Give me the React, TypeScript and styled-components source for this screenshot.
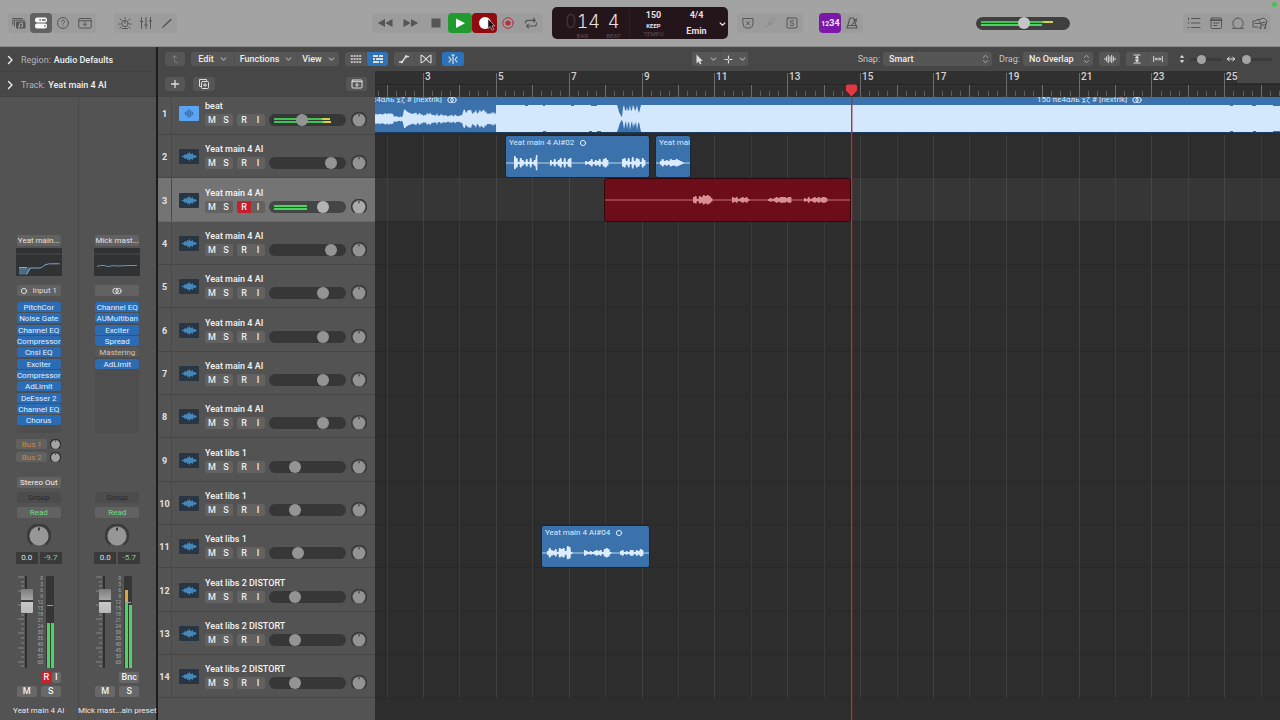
import React, { useEffect, useState } from 'react';
import styled, { createGlobalStyle, css } from 'styled-components';

/* ---------- theme values ---------- */

const BAR_WIDTH = 36.42;
const FIRST_BAR = 1.68;
const SIDE_WIDTH = 375;
const barX = (bar: number) => Math.round((bar - FIRST_BAR) * BAR_WIDTH);

const GlobalStyle = createGlobalStyle`
  * { box-sizing: border-box; }
  body {
    margin: 0;
    background: #2d2d2d;
    color: #e4e4e4;
    font-family: Roboto, "Liberation Sans", sans-serif;
    font-size: 9px;
    line-height: 12px;
  }
  button, input, select { font: inherit; color: inherit; margin: 0; padding: 0; border: 0; background: none; }
  svg { display: block; flex: none; }
`;

/* width of the timeline, which takes what the two side columns leave */
const useTimelineWidth = () => {
  const measure = () => Math.max(0, document.documentElement.clientWidth - SIDE_WIDTH);
  const [width, setWidth] = useState(measure);
  useEffect(() => {
    const update = () => setWidth(measure());
    window.addEventListener('resize', update);
    return () => window.removeEventListener('resize', update);
  }, []);
  return width;
};

const visibleBars = (width: number) => {
  const bars: number[] = [];
  for (let b = 2; barX(b) < width - 4; b++) bars.push(b);
  return bars;
};

/* ---------- icons ---------- */

type GlyphProps = { w?: number; h?: number; sw?: number; children: React.ReactNode };

const Glyph = ({ w = 14, h = 14, sw = 1, children }: GlyphProps) => (
  <svg width={w} height={h} viewBox={`0 0 ${w} ${h}`} fill="none" stroke="currentColor" strokeWidth={sw}
    strokeLinecap="round" strokeLinejoin="round" aria-hidden="true">
    {children}
  </svg>
);

const fill = { fill: 'currentColor', stroke: 'none' };

const LibraryIcon = () => (
  <Glyph>
    <path d="M.8 8.500V2.500h9.700M2.500 10.200V4.200h10" />
    <rect x="4" y="5.5" width="9.5" height="7" rx="1" {...fill} />
    <path d="M7.500 10.800V7.500l3-.6v3.400" stroke="#a0a0a0" />
    <circle cx="7" cy="10.8" r="1" fill="#a0a0a0" stroke="none" />
    <circle cx="10" cy="10.3" r="1" fill="#a0a0a0" stroke="none" />
  </Glyph>
);
const InspectorIcon = () => (
  <Glyph>
    <rect x="1" y="1.5" width="12" height="5" rx="2" {...fill} />
    <rect x="1" y="7.5" width="12" height="5" rx="2" {...fill} />
    <path d="M6 4h.2M8.500 4h2.500M10.800 10h.2" stroke="#5c5c5c" strokeWidth="1.6" />
  </Glyph>
);
const HelpIcon = () => (
  <Glyph>
    <circle cx="7" cy="7" r="5.5" />
    <path d="M5.400 5.600c.1-2 3.200-2 3.200 0 0 1.300-1.600 1.200-1.600 2.500M7 9.900v.1" />
  </Glyph>
);
const DrawerIcon = () => (
  <Glyph>
    <rect x=".8" y="2.5" width="12.4" height="9.5" rx="1" />
    <path d="M1 4.800h12M7 6v3.500M5.300 8 7 9.800 8.700 8" />
  </Glyph>
);
const SmartIcon = () => (
  <Glyph>
    <circle cx="7" cy="7.5" r="3.2" />
    <path d="M7 5v2.500M7 1.500v1M2 3l1.200 1M12 3l-1.200 1M.8 8h1.400M11.800 8h1.400M2 12l1-.8M12 12l-1-.8M4.500 12.500h5" />
  </Glyph>
);
const MixerIcon = () => (
  <Glyph>
    <path d="M2.500 1.500v11M7 1.500v11M11.500 1.500v11M1.200 5.500h2.600M5.700 9h2.600M10.200 5h2.600" />
  </Glyph>
);
const PencilIcon = () => (
  <Glyph>
    <path d="m3.500 10.500 7.500-7" strokeWidth="1.6" />
    <path d="m2.300 11.700.6-.6" />
  </Glyph>
);
const RewindIcon = () => (
  <Glyph w={16}><path d="M8 3v8L.8 7zM15.500 3v8L8.300 7z" {...fill} /></Glyph>
);
const ForwardIcon = () => (
  <Glyph w={16}><path d="M8 3v8l7.200-4zM.5 3v8l7.200-4z" {...fill} /></Glyph>
);
const StopIcon = () => <Glyph><rect x="2.5" y="2.5" width="9" height="9" {...fill} /></Glyph>;
const PlayIcon = () => <Glyph><path d="M3 2.500v9.500l9-4.700z" {...fill} /></Glyph>;
const RecordIcon = () => <Glyph><circle cx="7" cy="7" r="6" {...fill} /></Glyph>;
const CaptureIcon = () => (
  <Glyph><circle cx="7" cy="7" r="5.3" /><circle cx="7" cy="7" r="2.6" {...fill} /></Glyph>
);
const CycleIcon = () => (
  <Glyph sw={1.2}>
    <path d="M1.500 7V6.500q0-2.200 2.200-2.200H11M9.500 2.500l1.800 1.800-1.800 1.800M12.500 7v.8q0 2.200-2.200 2.200H3M4.500 11.800 2.700 10l1.800-1.800" />
  </Glyph>
);
const ReplaceIcon = () => (
  <Glyph><path d="M2 2.500h10v5.500q0 3-3 4H5q-3-1-3-4zM5.300 5.500l3.400 3.500M8.700 5.500 5.300 9" /></Glyph>
);
const TunerIcon = () => (
  <Glyph><path d="m2 12 4-4M6 8l1.500.4L12 4M6 8l-.4-1.800L10 2" /></Glyph>
);
const SoloIcon = () => (
  <Glyph>
    <rect x="2" y="2" width="10" height="10" rx="1" />
    <path d="M8.800 5.300q-.6-.8-1.800-.8-1.700 0-1.700 1.200T7 7t1.800 1.300T7 9.600q-1.300 0-1.900-.8" />
  </Glyph>
);
const MetronomeIcon = () => (
  <Glyph sw={1.2}><path d="M5 2h3.500L12 12H2zM3.200 9.500h7.500M6.500 9.500l5-6.500M9.800 3.600l2 1.500" /></Glyph>
);
const ListIcon = () => (
  <Glyph><path d="M4.500 2.500H13M4.500 7H13M4.500 11.500H13M1.500 2v2M1 7h1M1 11.500h1" /></Glyph>
);
const NotesIcon = () => (
  <Glyph>
    <rect x="2" y="2" width="10.5" height="10.5" rx="1" />
    <path d="M2 4.200h10.500" strokeWidth="1.8" />
    <path d="M4.500 7h5.500M4.500 9.500h3.500" />
  </Glyph>
);
const LoopIcon = () => (
  <Glyph>
    <path d="M1.500 12.300h11M4.700 12.300C2.900 11.300 1.900 9.500 1.900 7.300a5.100 5.300 0 0 1 10.200 0c0 2.200-1 4-2.800 5" />
  </Glyph>
);
const BrowserIcon = () => (
  <Glyph w={16}>
    <path d="M6 11H1V5h3l1-1.500h2l5-1.500 3 3-1 4H9M3 7.500h5M6 3.500l3 4M9 12V7l4-.8M13.500 12V8" />
    <circle cx="8.3" cy="12" r="1" {...fill} />
    <circle cx="12.8" cy="12" r="1" {...fill} />
  </Glyph>
);
const ChevronRight = () => <Glyph w={8} h={10} sw={1.4}><path d="m2.500 1.500 3.500 3.500-3.500 3.500" /></Glyph>;
const ChevronDown = () => <Glyph w={7} h={6} sw={1.2}><path d="m1.200 2 2.300 2.200L5.800 2" /></Glyph>;
const UpDown = () => <Glyph w={7} h={10}><path d="m1.300 3.500 2.200-2.200 2.200 2.200M1.300 6.500l2.200 2.200 2.200-2.200" /></Glyph>;
const UpArrow = () => <Glyph w={10} h={10}><path d="M4.500 1.500v5q0 2 2 2h1M2.500 3.500l2-2 2 2" /></Glyph>;
const GridIcon = () => (
  <Glyph w={12} h={10} sw={1.3}><path d="M.8 2h10.400M.8 5h10.400M.8 8h10.400" strokeDasharray="2 .8" strokeLinecap="butt" /></Glyph>
);
const RegionsIcon = () => (
  <Glyph w={12} h={10} sw={1.8}><path d="M1 2h5M7 2h4M1 5h2M4 5h7M1 8h6M8 8h3" strokeLinecap="butt" /></Glyph>
);
const AutomationIcon = () => (
  <Glyph w={12} h={10} sw={1.3}>
    <path d="M1.500 8h2.500l4-5.500h2.500" />
    <circle cx="4" cy="8" r="1.2" {...fill} />
    <circle cx="8" cy="2.5" r="1.2" {...fill} />
  </Glyph>
);
const FlexIcon = () => (
  <Glyph w={12} h={10} sw={1.1}><path d="M1 1.200v7.600q1.500 0 5-3.800t5-3.800v7.600q-1.500 0-5-3.800T1 1.200z" /></Glyph>
);
const CatchIcon = () => (
  <Glyph w={12} h={10} sw={1.2}>
    <path d="M6 3v6.500M2 3l2 2.500-2 2.500M10 3 8 5.500 10 8" />
    <path d="M4 .5h4L6 3z" {...fill} />
  </Glyph>
);
const PlusIcon = () => <Glyph w={10} h={10} sw={1.3}><path d="M5 1.500v7M1.500 5h7" /></Glyph>;
const DuplicateIcon = () => (
  <Glyph w={12} h={12}>
    <path d="M2.500 8.500h-1v-7h7v1" />
    <rect x="3.5" y="3.5" width="7" height="7" rx="1" />
    <path d="M7 5.300v3.400M5.300 7h3.400" />
  </Glyph>
);
const TrayIcon = () => (
  <Glyph w={12} h={12}>
    <rect x="1" y="2" width="10" height="8" rx="1" />
    <path d="M1 3.700h10M6 5v3M4.500 6.700 6 8.200l1.500-1.500" />
  </Glyph>
);
const PointerIcon = () => <Glyph w={9} h={11}><path d="M1.500.5v9l2-2 1.500 3 1.500-.7-1.400-2.800h2.700z" {...fill} /></Glyph>;
const CrossIcon = () => <Glyph w={9} h={9} sw={1.2}><path d="M4.500 1v2.500M4.500 5.500V8M1 4.500h2.500M5.500 4.500H8" /></Glyph>;
const WaveIcon = () => (
  <Glyph w={12} h={12}><path d="M1 5.300v1.400M2.700 3.800v4.400M4.300 2.300v7.400M6 3.800v4.400M7.700 2.300v7.400M9.300 3.800v4.400M11 5.300v1.400" /></Glyph>
);
const FitHeightIcon = () => <Glyph w={10} h={10} sw={1.2}><path d="M2 1h6M2 9h6M5 3v4M3.700 3.800 5 2.500l1.300 1.300M3.700 6.200 5 7.500l1.300-1.300" /></Glyph>;
const FitWidthIcon = () => <Glyph w={10} h={10}><path d="M.7 2.500v5M9.300 2.500v5M2.500 5h5M3.500 3.800 2.300 5l1.200 1.200M6.500 3.800 7.700 5 6.500 6.200" /></Glyph>;
const VerticalIcon = () => <Glyph w={8} h={10}><path d="M4 1 1.800 3.800h4.400zM4 9 1.800 6.200h4.400z" {...fill} /></Glyph>;
const HorizontalIcon = () => <Glyph w={10} h={8}><path d="M1.500 4h7M3.300 2 1.300 4l2 2M6.700 2l2 2-2 2" /></Glyph>;
const StereoIcon = () => (
  <Glyph w={12} h={8}><circle cx="4.5" cy="4" r="2.7" /><circle cx="7.5" cy="4" r="2.7" /></Glyph>
);
const MonoIcon = () => <Glyph w={8} h={8}><circle cx="4" cy="4" r="2.6" /></Glyph>;

const MouseCursor = styled.svg`
  position: absolute;
  left: 15px;
  top: 5px;
`;

/* ---------- shared control pieces ---------- */

const Cluster = styled.div<{ $gap?: number }>`
  display: flex;
  align-items: center;
  gap: ${p => p.$gap ?? 6}px;
`;

const Stretch = styled.div<{ $grow: number }>`
  flex: ${p => p.$grow} 1 0;
`;

/* ---------- main toolbar ---------- */

const Page = styled.div`
  min-height: 100vh;
  display: flex;
  flex-direction: column;
`;

const Toolbar = styled.header`
  position: relative;
  display: flex;
  align-items: center;
  height: 47px;
  padding: 0 9px 0 8px;
  background: #a3a3a3;
  color: #4c4c4c;
  border-bottom: 1px solid #8a8a8a;
`;

const ToolGroup = styled.div`
  display: flex;
  align-items: center;
  height: 20px;
  border-radius: 4px;
  background: #9c9c9c;
`;

const ToolButton = styled.button<{ $bg?: string; $fg?: string; $w?: number }>`
  position: relative;
  display: grid;
  place-items: center;
  width: ${p => p.$w ?? 22}px;
  height: 20px;
  border-radius: 4px;
  background: ${p => p.$bg ?? 'transparent'};
  color: ${p => p.$fg ?? '#555'};
`;

const Lcd = styled.section`
  display: flex;
  align-items: stretch;
  width: 176px;
  height: 32px;
  padding: 3px 0 2px 10px;
  border-radius: 5px;
  background: #24151a;
  color: #e8dfe2;
`;

const LcdCell = styled.div<{ $w: number }>`
  display: flex;
  flex-direction: column;
  align-items: center;
  justify-content: space-between;
  width: ${p => p.$w}px;
  font-size: 9px;
  line-height: 11px;
  font-weight: 700;
`;

const LcdDivider = styled.div`
  width: 6px;
  border-right: 1px solid #2f2026;
`;

const LcdDigits = styled.div`
  font-family: Inter, "Liberation Sans", sans-serif;
  font-size: 18px;
  line-height: 23px;
  font-weight: 300;
  font-variant-numeric: tabular-nums;
  white-space: nowrap;
`;

const Ghost = styled.span`
  color: #48363b;
`;

const LcdCaption = styled.span<{ $bright?: boolean }>`
  font-size: 6px;
  line-height: 6px;
  font-weight: ${p => (p.$bright ? 700 : 400)};
  color: ${p => (p.$bright ? '#e8dfe2' : '#604f54')};
`;

const LcdMenu = styled.button`
  display: grid;
  place-items: center;
  width: 12px;
  color: #e8dfe2;
`;

const CountIn = styled.span`
  font-size: 9px;
  font-weight: 700;
  small { font-size: 7px; }
`;

const CameraDot = styled.i`
  position: absolute;
  right: 3px;
  top: 2px;
  width: 5px;
  height: 5px;
  border-radius: 50%;
  background: #4cc04f;
`;

/* ---------- level sliders ---------- */

const LevelBox = styled.div<{ $w: number; $h: number; $bg: string }>`
  position: relative;
  display: flex;
  flex-direction: column;
  justify-content: center;
  gap: 1px;
  width: ${p => p.$w}px;
  height: ${p => p.$h}px;
  padding: 0 5px;
  border-radius: 7px;
  background: ${p => p.$bg};
`;

const LevelBar = styled.i<{ $hot?: boolean }>`
  display: block;
  height: 2px;
  background: ${p => (p.$hot ? 'linear-gradient(90deg, #3fc455 84%, #d9d23c 88%)' : '#4fd062')};
`;

const LevelRange = styled.input<{ $thumb: string }>`
  position: absolute;
  inset: 0;
  width: 100%;
  height: 100%;
  appearance: none;
  &::-webkit-slider-thumb {
    appearance: none;
    width: 12px;
    height: 12px;
    border-radius: 50%;
    background: ${p => p.$thumb};
  }
`;

type LevelProps = {
  label: string; value: number; levels?: [number, number]; hot?: boolean;
  w?: number; h?: number; bg?: string; thumb?: string;
};

const Level = ({ label, value, levels, hot, w = 77, h = 12, bg = '#373737', thumb = '#999' }: LevelProps) => {
  const [v, setV] = useState(value);
  return (
    <LevelBox $w={w} $h={h} $bg={bg}>
      {levels?.map((n, i) => <LevelBar key={i} $hot={hot && (i === 0 || n > 80)} style={{ width: `${n}%` }} />)}
      <LevelRange type="range" aria-label={label} min={0} max={100} value={v} $thumb={thumb}
        onChange={e => setV(Number(e.target.value))} />
    </LevelBox>
  );
};

/* ---------- body columns ---------- */

const Body = styled.div`
  flex: 1;
  display: flex;
`;

const Inspector = styled.aside`
  display: flex;
  flex-direction: column;
  width: 158px;
  flex: none;
  background: #535353;
  border-right: 2px solid #1c1c1c;
`;

const InspectorRow = styled.button`
  display: flex;
  align-items: center;
  gap: 7px;
  height: 25px;
  padding: 1px 6px 0;
  background: #474747;
  border-bottom: 1px solid #424242;
  text-align: left;
  font-weight: 500;
  color: #f0f0f0;
  white-space: nowrap;
`;

const RowKey = styled.span`
  color: #b4b4b4;
  margin-right: -4px;
  font-weight: 400;
`;

const Strips = styled.div`
  flex: 1;
  display: flex;
`;

const Strip = styled.section`
  flex: 1 1 0;
  min-width: 0;
  display: flex;
  flex-direction: column;
  align-items: center;
  justify-content: flex-end;
  padding-bottom: 4px;
  font-size: 8px;
  line-height: 10px;
  & + & { border-left: 1px solid #494949; }
`;

const slotBase = css`
  display: block;
  width: 44px;
  height: 11px;
  border-radius: 2px;
  line-height: 11px;
  text-align: center;
  white-space: nowrap;
`;

const StripButton = styled.button<{ $fg?: string; $bg?: string }>`
  ${slotBase}
  color: ${p => p.$fg ?? '#e2e2e2'};
  background: ${p => p.$bg ?? '#626262'};
`;

const EqThumb = styled.svg`
  margin: 2px 0 9px;
`;

const InputRow = styled.button`
  ${slotBase}
  display: flex;
  align-items: center;
  justify-content: center;
  gap: 4px;
  background: #626262;
  color: #dcdcdc;
`;

const PluginList = styled.ul`
  display: flex;
  flex-direction: column;
  gap: 1px;
  width: 44px;
  height: 131px;
  margin: 6px 0;
  padding: 0;
  list-style: none;
  background: #4e4e4e;
  li:nth-child(3n - 1) { margin-bottom: 1px; }
`;

const Plugin = styled.button<{ $off?: boolean }>`
  ${slotBase}
  height: 10px;
  background: ${p => (p.$off ? '#585858' : '#2b6cb4')};
  color: ${p => (p.$off ? '#d2c3b0' : '#e2efff')};
`;

const Sends = styled.div`
  display: flex;
  flex-direction: column;
  gap: 3px;
  height: 23px;
  margin-bottom: 15px;
`;

const SendRow = styled.div`
  display: flex;
  align-items: center;
  gap: 3px;
  height: 10px;
  width: 45px;
`;

const SendButton = styled.button`
  width: 31px;
  height: 10px;
  border-radius: 2px;
  background: #616161;
  color: #c58a45;
  line-height: 11px;
`;

const Dial = styled.button`
  display: block;
  border-radius: 50%;
`;

const Spaced = styled.div<{ $top: number }>`
  display: flex;
  align-items: flex-start;
  justify-content: center;
  gap: 2px;
  margin-top: ${p => p.$top}px;
`;

const Readout = styled.output<{ $green?: boolean }>`
  width: 22px;
  height: 12px;
  background: #3a3a3a;
  text-align: center;
  line-height: 12px;
  color: ${p => (p.$green ? '#7ad09a' : '#e0e0e0')};
`;

const FaderArea = styled.div`
  position: relative;
  width: 46px;
  height: 92px;
  margin: 12px 0 4px;
`;

const FaderRange = styled.input`
  position: absolute;
  left: 5px;
  top: 0;
  width: 12px;
  height: 92px;
  appearance: none;
  writing-mode: vertical-lr;
  direction: rtl;
  &::-webkit-slider-thumb {
    appearance: none;
    width: 12px;
    height: 24px;
    border-radius: 1px;
    background: linear-gradient(#7d7d7d, #a6a6a6 46%, #3c3c3c 48%, #3c3c3c 53%, #c8c8c8 55%, #b9b9b9);
  }
`;

const SmallKeys = styled.div`
  display: flex;
  justify-content: flex-end;
  width: 44px;
  height: 11px;
  margin-bottom: 3px;
`;

const KeyPair = styled.div`
  display: flex;
  justify-content: space-between;
  width: 44px;
  margin-bottom: 8px;
`;

const StripKey = styled.button<{ $bg?: string; $w?: number }>`
  width: ${p => p.$w ?? 20}px;
  height: 11px;
  border-radius: 2px;
  background: ${p => p.$bg ?? '#686868'};
  font-size: 9px;
  font-weight: 500;
  line-height: 11px;
  color: #f2f2f2;
`;

const StripName = styled.div`
  height: 11px;
  font-size: 8px;
  line-height: 12px;
  white-space: nowrap;
  color: #e8e8e8;
`;

const PanDial = ({ size, ring = '#3b3b3b', face = '#979797', label }: { size: number; ring?: string; face?: string; label: string }) => (
  <Dial type="button" aria-label={label}>
    <svg width={size} height={size} viewBox="0 0 24 24" aria-hidden="true">
      <path d="M5.500 20.500a11 11 0 1 1 13 0" fill="none" stroke={ring} strokeWidth="2.6" />
      <circle cx="12" cy="12" r="9.5" fill={face} />
      <path d="M12 3.500v3" stroke="#2f2f2f" strokeWidth="1.8" />
    </svg>
  </Dial>
);

const FADER_MARKS = ['0', '3', '6', '9', '12', '15', '18', '21', '24', '30', '35', '40', '45', '50', '60'];

type StripData = {
  setting: string; mono: boolean; plugins: string[]; sends: string[]; output?: string;
  peak: string; meters: [number, number]; hold: number; hot?: boolean; name: string; armed?: boolean;
};

const STRIPS: StripData[] = [
  {
    setting: 'Yeat main...', mono: true,
    plugins: ['PitchCor', 'Noise Gate', 'Channel EQ', 'Compressor', 'Cnsl EQ', 'Exciter', 'Compressor', 'AdLimit', 'DeEsser 2', 'Channel EQ', 'Chorus'],
    sends: ['Bus 1', 'Bus 2'], output: 'Stereo Out', peak: '-9.7', meters: [47, 47], hold: 29, name: 'Yeat main 4 AI', armed: true,
  },
  {
    setting: 'Mick mast...', mono: false,
    plugins: ['Channel EQ', 'AUMultiban', 'Exciter', 'Spread', 'Mastering', 'AdLimit'],
    sends: [], peak: '-5.7', meters: [14, 29], hold: 26, hot: true, name: 'Mick mast...ain preset',
  },
];

const ChannelStrip = ({ s }: { s: StripData }) => {
  const [vol, setVol] = useState(81);
  return (
    <Strip aria-label={s.name}>
      <StripButton type="button">{s.setting}</StripButton>
      <EqThumb width="46" height="28" viewBox="0 0 46 28" aria-hidden="true">
        <rect width="46" height="28" fill="#303234" />
        <path d="M0 6h46" stroke="#4a4d50" />
        {s.mono
          ? <>
            <path d="M3 19.500h12l-4 7H3z" fill="#4b6b87" />
            <path d="M3 19.500h8M10.500 26.500l4-6.500h9q2 0 4-2t6-2.200h10" fill="none" stroke="#7fa6c8" />
          </>
          : <path d="M3 18.500q3-1.500 7-1l4 1 5-.8 6 .3 10-.5h8" fill="none" stroke="#6f93b8" />}
      </EqThumb>
      <InputRow type="button" aria-label="Input">
        {s.mono ? <><MonoIcon />Input 1</> : <StereoIcon />}
      </InputRow>
      <PluginList>
        {s.plugins.map((p, i) => <li key={i}><Plugin type="button" $off={p === 'Mastering'}>{p}</Plugin></li>)}
      </PluginList>
      <Sends>
        {s.sends.map(b => (
          <SendRow key={b}>
            <SendButton type="button">{b}</SendButton>
            <PanDial size={11} label={`${b} level`} ring="#2e2e2e" face="#a4a4a4" />
          </SendRow>
        ))}
      </Sends>
      {s.output
        ? <StripButton type="button" $fg="#f0f0f0">{s.output}</StripButton>
        : <StripButton type="button" $bg="transparent" aria-label="Output" />}
      <Spaced $top={4}><StripButton type="button" $bg="#4c4c4c" $fg="#292929">Group</StripButton></Spaced>
      <Spaced $top={4}><StripButton type="button" $fg="#6fdc86">Read</StripButton></Spaced>
      <Spaced $top={6}><PanDial size={24} label={`${s.name} pan`} /></Spaced>
      <Spaced $top={4}>
        <Readout>0.0</Readout>
        <Readout $green>{s.peak}</Readout>
      </Spaced>
      <FaderArea>
        <svg width="46" height="92" viewBox="0 0 46 92" aria-hidden="true">
          <rect x="9" y="0" width="2" height="92" fill="#2f2f2f" />
          {Array.from({ length: 20 }, (_, i) => (
            <path key={i} d={`M${i % 3 === 0 ? 2 : 5} ${Math.round(1 + i * 4.7)}h${i % 3 === 0 ? 6 : 3}`} stroke="#8a8a8a" strokeWidth="1" />
          ))}
          {FADER_MARKS.map((m, i) => (
            <text key={m} x="27" y={4 + i * 6} fontSize="5" fill="#a8a8a8" textAnchor="end">{m}</text>
          ))}
          <rect x="30" y="0" width="8" height="92" fill="#363636" />
          {s.meters.map((top, i) => (
            <g key={i}>
              <rect x={31 + i * 4} y={top} width="3" height={92 - top} fill="#4ad560" />
              {s.hot && i === 0 && <rect x="31" y={top} width="3" height="12" fill="#e0a53a" />}
            </g>
          ))}
          <path d={`M31 ${s.hold + 0.5}h6`} stroke="#a0a0a0" />
        </svg>
        <FaderRange type="range" aria-label={`${s.name} volume`} min={0} max={100} value={vol}
          onChange={e => setVol(Number(e.target.value))} />
      </FaderArea>
      <SmallKeys>
        {s.armed
          ? <><StripKey type="button" $w={11} $bg="#c5222e">R</StripKey><StripKey type="button" $w={9}>I</StripKey></>
          : <StripKey type="button">Bnc</StripKey>}
      </SmallKeys>
      <KeyPair>
        <StripKey type="button">M</StripKey>
        <StripKey type="button">S</StripKey>
      </KeyPair>
      <StripName>{s.name}</StripName>
    </Strip>
  );
};

/* ---------- tracks area ---------- */

const Arrange = styled.main`
  flex: 1;
  min-width: 0;
  display: flex;
  flex-direction: column;
`;

const MenuBar = styled.div`
  display: flex;
  align-items: center;
  height: 24px;
  padding: 0 8px 0 7px;
  background: #474747;
  white-space: nowrap;
`;

const Segment = styled.div`
  display: flex;
  height: 14px;
  border-radius: 3px;
  background: #565656;
  overflow: hidden;
`;

const SegButton = styled.button<{ $w: number; $on?: boolean; $dim?: boolean }>`
  display: flex;
  align-items: center;
  justify-content: center;
  gap: 6px;
  width: ${p => p.$w}px;
  height: 14px;
  background: ${p => (p.$on ? '#2c73bb' : 'transparent')};
  color: ${p => (p.$dim ? '#7c7c7c' : '#dedede')};
  & + & { border-left: 1px solid #4f4f4f; }
`;

const MenuText = styled.span`
  font-weight: 500;
  color: #ececec;
`;

const Faint = styled.span`
  color: #9a9a9a;
`;

const FieldLabel = styled.label`
  color: #c4c4c4;
  margin: 0 -3px 0 1px;
`;

const SelectBox = styled.div<{ $w: number }>`
  position: relative;
  width: ${p => p.$w}px;
  height: 14px;
  border-radius: 3px;
  background: #565656;
  color: #a8a8a8;
  select {
    width: 100%;
    height: 14px;
    padding: 0 6px;
    appearance: none;
    font-weight: 500;
    color: #efefef;
  }
  svg { position: absolute; right: 3px; top: 2px; pointer-events: none; }
`;

const ZoomRange = styled.input`
  width: 32px;
  height: 9px;
  appearance: none;
  background: linear-gradient(#3b3b3b, #3b3b3b) center / 100% 3px no-repeat;
  &::-webkit-slider-thumb {
    appearance: none;
    width: 9px;
    height: 9px;
    border-radius: 50%;
    background: #a4a4a4;
  }
`;

const TrackGrid = styled.div`
  flex: 1;
  display: grid;
  grid-template-columns: 217px minmax(0, 1fr);
  grid-template-rows: 26px minmax(0, auto);
`;

const HeaderTools = styled.div`
  display: flex;
  align-items: center;
  gap: 8px;
  padding: 0 8px 0 7px;
  background: #474747;
`;

const Ruler = styled.div`
  position: relative;
  background: #303030;
  overflow: hidden;
`;

const RulerLabel = styled.span`
  position: absolute;
  top: 0;
  font-size: 10px;
  font-weight: 500;
  color: #d4d4d4;
`;

const OuterRange = styled.div`
  position: absolute;
  top: 0;
  right: 0;
  height: 12px;
  background: #484848;
`;

const TrackList = styled.ol`
  margin: 0;
  padding: 0;
  list-style: none;
  background: #535353;
`;

const rowRhythm = css`
  height: 43px;
  &:first-child { height: 38px; }
  &:nth-child(3n) { height: 44px; }
`;

const TrackRow = styled.li<{ $selected?: boolean }>`
  ${rowRhythm}
  display: flex;
  align-items: flex-end;
  overflow: hidden;
  background: ${p => (p.$selected ? '#747474' : '#535353')};
  border-bottom: 1px solid ${p => (p.$selected ? '#6a6a6a' : '#474747')};
`;

const TrackNumber = styled.span`
  align-self: stretch;
  display: flex;
  align-items: flex-end;
  justify-content: center;
  width: 14px;
  padding-bottom: 14px;
  border-right: 1px solid #4a4a4a;
  font-weight: 700;
  color: #e2e2e2;
`;

const TrackIcon = styled.svg`
  margin: 0 6px 13px 7px;
`;

const TrackMain = styled.div`
  flex: 1;
  padding-bottom: 7px;
`;

const TrackName = styled.div`
  height: 14px;
  line-height: 14px;
  font-weight: 500;
  color: #f4f4f4;
  white-space: nowrap;
`;

const TrackControls = styled.div`
  display: flex;
  align-items: center;
  height: 14px;
`;

const KeyGroup = styled.div`
  display: flex;
  width: 28px;
  height: 12px;
  margin-right: 4px;
  border-radius: 2px;
  background: #626262;
  overflow: hidden;
`;

const TrackKey = styled.button<{ $armed?: boolean }>`
  flex: 1;
  font-weight: 500;
  line-height: 13px;
  color: #ededed;
  background: ${p => (p.$armed ? '#c3202d' : 'transparent')};
`;

const DialSlot = styled.div`
  margin-left: 5px;
`;

const Lanes = styled.div`
  position: relative;
  overflow: hidden;
  background: #2d2d2d;
`;

const GridLines = styled.svg`
  position: absolute;
  left: 0;
  top: 0;
  pointer-events: none;
`;

const Lane = styled.div<{ $selected?: boolean }>`
  ${rowRhythm}
  position: relative;
  background: ${p => (p.$selected ? '#363636' : 'transparent')};
  border-bottom: 1px solid #292929;
`;

const Clip = styled.div<{ $red?: boolean }>`
  position: absolute;
  top: 0;
  bottom: 0;
  overflow: hidden;
  border: 1px solid ${p => (p.$red ? '#2e0a0e' : '#16283c')};
  border-radius: 3px;
  background: ${p => (p.$red ? '#6d0d19' : '#3b72ac')};
`;

const ClipTitle = styled.span`
  position: absolute;
  left: 3px;
  top: 1px;
  display: flex;
  align-items: center;
  gap: 5px;
  font-size: 8px;
  line-height: 11px;
  white-space: nowrap;
  color: #dcebfb;
`;

const BeatClip = styled.div`
  position: absolute;
  inset: 0 0 1px;
  overflow: hidden;
  background: #3b72ac;
  border-bottom: 1px solid #1b3c60;
`;

const BeatTitle = styled.span`
  position: absolute;
  top: -3px;
  display: flex;
  align-items: center;
  gap: 4px;
  font-size: 8px;
  line-height: 11px;
  white-space: nowrap;
  color: #d7e8fa;
`;

const Playhead = styled.div`
  position: absolute;
  top: 0;
  bottom: 0;
  width: 1px;
  background: #b0343c;
  box-shadow: 1px 0 rgba(150, 40, 48, 0.4);
`;

const PlayheadPin = styled.svg`
  position: absolute;
  top: 13px;
`;

/* ---------- data ---------- */

type Track = { name: string; vol: number; levels?: [number, number]; selected?: boolean };

const TRACKS: Track[] = [
  { name: 'beat', vol: 42, levels: [84, 85] },
  { name: 'Yeat main 4 AI', vol: 86 },
  { name: 'Yeat main 4 AI', vol: 74, levels: [49, 49], selected: true },
  { name: 'Yeat main 4 AI', vol: 86 },
  { name: 'Yeat main 4 AI', vol: 74 },
  { name: 'Yeat main 4 AI', vol: 74 },
  { name: 'Yeat main 4 AI', vol: 74 },
  { name: 'Yeat main 4 AI', vol: 74 },
  { name: 'Yeat libs 1', vol: 30 },
  { name: 'Yeat libs 1', vol: 30 },
  { name: 'Yeat libs 1', vol: 35 },
  { name: 'Yeat libs 2 DISTORT', vol: 30 },
  { name: 'Yeat libs 2 DISTORT', vol: 30 },
  { name: 'Yeat libs 2 DISTORT', vol: 30 },
];

type Burst = { x: number; amps: number[] };
type ClipData = { track: number; from: number; to: number; title?: string; loop?: boolean; red?: boolean; bursts: Burst[] };

const CLIPS: ClipData[] = [
  {
    track: 1, from: 5.25, to: 9.22, title: 'Yeat main 4 AI#02', loop: true,
    bursts: [
      { x: 8, amps: [7, 5, 1, 5, 3, 1, 4, 1, 5, 1, 3, 8] },
      { x: 44, amps: [3, 1, 4, 1, 3, 5, 1, 5, 1, 4, 5] },
      { x: 79, amps: [2, 1, 2, 4, 1, 3, 2, 4, 1, 4, 5, 3] },
      { x: 116, amps: [4, 5, 2, 5, 1, 6, 2, 5, 4, 1, 5, 3] },
    ],
  },
  { track: 1, from: 9.37, to: 10.35, title: 'Yeat mai', bursts: [{ x: 4, amps: [2, 4, 2, 3, 2, 4, 3, 3, 4, 3, 2, 1] }] },
  {
    track: 2, from: 7.98, to: 14.75, red: true,
    bursts: [
      { x: 88, amps: [3, 4, 1, 4, 3, 5, 4, 5, 4, 2] },
      { x: 127, amps: [3, 2, 3, 1, 2, 3, 2, 3, 1] },
      { x: 163, amps: [1, 2, 1, 2, 3, 2, 3, 3, 3, 2, 3, 3] },
      { x: 199, amps: [2, 1, 3, 1, 2, 3, 2, 3, 2, 3, 3, 2] },
    ],
  },
  {
    track: 10, from: 6.25, to: 9.23, title: 'Yeat main 4 AI#04', loop: true,
    bursts: [
      { x: 5, amps: [2, 5, 3, 2, 4, 1, 5, 4, 5, 2, 7, 6, 1] },
      { x: 42, amps: [3, 2, 1, 2, 1, 2, 3, 2, 3, 1, 4, 5, 4, 1] },
      { x: 78, amps: [2, 3, 1, 2, 1, 3, 3, 1, 3, 2, 4, 3] },
    ],
  },
];

const burstPath = ({ x, amps }: Burst, mid: number) => {
  const step = 2;
  const top = amps.map((a, i) => `${x + i * step} ${mid - a} ${x + i * step + 1.4} ${mid - a}`);
  const bottom = amps.map((a, i) => `${x + i * step + 1.4} ${mid + a * 0.9} ${x + i * step} ${mid + a * 0.9}`).reverse();
  return `M${top.join(' L')} L${bottom.join(' L')}Z`;
};

const noise = (n: number) => {
  const v = Math.sin(n * 12.9898) * 43758.5453;
  return v - Math.floor(v);
};

/* envelope of the intro before the loud section of the beat */
const introPath = () => {
  const mid = 22;
  const pts: number[] = [];
  for (let x = 0; x <= 121; x++) {
    let a = 4 + noise(x) * 2;
    if (x > 18 && x < 28) a = 1.5 + noise(x) * 2;
    if (x >= 29 && x < 38) a = 9 - (x - 29) * 0.6 + noise(x);
    if (x >= 38 && x < 68) a = 3 + noise(x) * 4;
    if (x >= 68 && x < 88) a = 2.5 + noise(x) * 3;
    if (x >= 88 && x < 114) a = 5 + noise(x) * 5;
    if (x >= 114) a = 3.5 + noise(x) * 4;
    pts.push(a);
  }
  const top = pts.map((a, x) => `${x} ${(mid - a).toFixed(1)}`);
  const low = pts.map((a, x) => `${x} ${(mid + a * 0.95).toFixed(1)}`).reverse();
  return `M${top.join('L')}L${low.join('L')}Z`;
};

/* short gap with drum hits between the two loud sections */
const breakPath = () => {
  const tops = [0, 3, 7, 9, 11, 12, 3, 0, 5, 6, 2, 6, 5, 0, 6, 5, 0, 2, 6, 4, 0, 5, 8, 4, 0];
  const lows = [0, 3, 6, 9, 11, 12, 9, 3, 8, 11, 3, 9, 10, 2, 8, 11, 4, 9, 6, 11, 2, 8, 10, 5, 0];
  const top = tops.map((t, i) => `${242 + i} ${8 + t}`);
  const low = lows.map((t, i) => `${242 + i} ${35 - t}`).reverse();
  return `M${top.join('L')}L${low.join('L')}Z`;
};

/* ---------- composed sections ---------- */

const AppToolbar = () => (
  <Toolbar>
    <Cluster $gap={18}>
      <ToolGroup>
        <ToolButton type="button" aria-label="Library"><LibraryIcon /></ToolButton>
        <ToolButton type="button" aria-label="Inspector" $bg="#616161" $fg="#fafafa"><InspectorIcon /></ToolButton>
        <ToolButton type="button" aria-label="Quick Help"><HelpIcon /></ToolButton>
        <ToolButton type="button" aria-label="Toolbar"><DrawerIcon /></ToolButton>
      </ToolGroup>
      <ToolGroup>
        <ToolButton type="button" aria-label="Smart Controls" $w={21}><SmartIcon /></ToolButton>
        <ToolButton type="button" aria-label="Mixer"><MixerIcon /></ToolButton>
        <ToolButton type="button" aria-label="Editors" $w={20}><PencilIcon /></ToolButton>
      </ToolGroup>
    </Cluster>
    <Stretch $grow={26} />
    <Cluster $gap={9}>
      <ToolGroup>
        <ToolButton type="button" aria-label="Rewind" $w={26}><RewindIcon /></ToolButton>
        <ToolButton type="button" aria-label="Forward" $w={26}><ForwardIcon /></ToolButton>
        <ToolButton type="button" aria-label="Stop" $w={24}><StopIcon /></ToolButton>
        <ToolButton type="button" aria-label="Play" $w={24} $bg="#219b2f" $fg="#fff"><PlayIcon /></ToolButton>
        <ToolButton type="button" aria-label="Record" $w={25} $bg="#900a12" $fg="#fff">
          <RecordIcon />
          <MouseCursor width="9" height="13" viewBox="0 0 9 13" aria-hidden="true">
            <path d="M1 1v9.500l2.300-2 1.700 3.700 1.700-.8L5 7.800h3z" fill="#111" stroke="#ddd" strokeWidth=".6" />
          </MouseCursor>
        </ToolButton>
        <ToolButton type="button" aria-label="Capture Recording" $fg="#b4303a"><CaptureIcon /></ToolButton>
        <ToolButton type="button" aria-label="Cycle" $w={24}><CycleIcon /></ToolButton>
      </ToolGroup>
      <Lcd aria-label="Position">
        <LcdCell $w={40}>
          <LcdDigits><Ghost>0</Ghost>14</LcdDigits>
          <LcdCaption>BAR</LcdCaption>
        </LcdCell>
        <LcdCell $w={22}>
          <LcdDigits>4</LcdDigits>
          <LcdCaption>BEAT</LcdCaption>
        </LcdCell>
        <LcdDivider />
        <LcdCell $w={46}>
          <span>150</span>
          <LcdCaption $bright>KEEP</LcdCaption>
          <LcdCaption>TEMPO</LcdCaption>
        </LcdCell>
        <LcdCell $w={40}>
          <span>4/4</span>
          <span>Emin</span>
        </LcdCell>
        <LcdMenu type="button" aria-label="Display mode"><ChevronDown /></LcdMenu>
      </Lcd>
      <ToolGroup>
        <ToolButton type="button" aria-label="Replace"><ReplaceIcon /></ToolButton>
        <ToolButton type="button" aria-label="Tuner" $fg="#868686"><TunerIcon /></ToolButton>
        <ToolButton type="button" aria-label="Solo"><SoloIcon /></ToolButton>
      </ToolGroup>
      <Cluster $gap={7}>
        <i />
        <ToolGroup>
          <ToolButton type="button" aria-label="Count-in" $bg="#7a18a8" $fg="#f4e6fb"><CountIn><small>12</small>34</CountIn></ToolButton>
          <ToolButton type="button" aria-label="Metronome"><MetronomeIcon /></ToolButton>
        </ToolGroup>
      </Cluster>
    </Cluster>
    <Stretch $grow={15} />
    <Level label="Master volume" value={51} w={94} h={13} bg="#3f3f3f" thumb="#c6c6c6" levels={[86, 72]} hot />
    <Stretch $grow={15} />
    <ToolGroup>
      <ToolButton type="button" aria-label="List Editors"><ListIcon /></ToolButton>
      <ToolButton type="button" aria-label="Notes"><NotesIcon /></ToolButton>
      <ToolButton type="button" aria-label="Loop Browser"><LoopIcon /></ToolButton>
      <ToolButton type="button" aria-label="Browsers"><BrowserIcon /></ToolButton>
    </ToolGroup>
    <CameraDot />
  </Toolbar>
);

const TracksMenuBar = () => (
  <MenuBar>
    <Cluster>
      <Segment><SegButton type="button" aria-label="Leave folder" $w={20} $dim><UpArrow /></SegButton></Segment>
      <Segment>
        <SegButton type="button" $w={43}><MenuText>Edit</MenuText><Faint><ChevronDown /></Faint></SegButton>
        <SegButton type="button" $w={63}><MenuText>Functions</MenuText><Faint><ChevronDown /></Faint></SegButton>
        <SegButton type="button" $w={42}><MenuText>View</MenuText><Faint><ChevronDown /></Faint></SegButton>
      </Segment>
      <Segment>
        <SegButton type="button" aria-label="Grid view" $w={21}><GridIcon /></SegButton>
        <SegButton type="button" aria-label="Tracks view" $w={22} $on><RegionsIcon /></SegButton>
      </Segment>
      <Segment>
        <SegButton type="button" aria-label="Automation" $w={20}><AutomationIcon /></SegButton>
        <SegButton type="button" aria-label="Flex" $w={22}><FlexIcon /></SegButton>
      </Segment>
      <Segment><SegButton type="button" aria-label="Catch playhead" $w={22} $on><CatchIcon /></SegButton></Segment>
    </Cluster>
    <Stretch $grow={21} />
    <Segment>
      <SegButton type="button" aria-label="Pointer tool" $w={28}><PointerIcon /><Faint><ChevronDown /></Faint></SegButton>
      <SegButton type="button" aria-label="Marquee tool" $w={28}><CrossIcon /><Faint><ChevronDown /></Faint></SegButton>
    </Segment>
    <Stretch $grow={10} />
    <Cluster>
      <FieldLabel htmlFor="snap">Snap:</FieldLabel>
      <SelectBox $w={109}>
        <select id="snap" defaultValue="Smart"><option>Smart</option><option>Bar</option><option>Beat</option></select>
        <UpDown />
      </SelectBox>
      <FieldLabel htmlFor="drag">Drag:</FieldLabel>
      <SelectBox $w={70}>
        <select id="drag" defaultValue="No Overlap"><option>No Overlap</option><option>Overlap</option></select>
        <UpDown />
      </SelectBox>
      <Segment><SegButton type="button" aria-label="Waveform zoom" $w={21}><WaveIcon /></SegButton></Segment>
      <Segment>
        <SegButton type="button" aria-label="Fit height" $w={21}><FitHeightIcon /></SegButton>
        <SegButton type="button" aria-label="Fit width" $w={21}><FitWidthIcon /></SegButton>
      </Segment>
      <Cluster $gap={4}>
        <i />
        <VerticalIcon />
        <ZoomRange type="range" aria-label="Vertical zoom" defaultValue="32" />
        <HorizontalIcon />
        <ZoomRange type="range" aria-label="Horizontal zoom" defaultValue="10" />
      </Cluster>
    </Cluster>
  </MenuBar>
);

const BeatIcon = () => (
  <TrackIcon width="20" height="15" viewBox="0 0 20 15" aria-hidden="true">
    <rect width="20" height="15" rx="1" fill="#5ba4f4" />
    <path d="M6.500 6v3M8.200 4.500v6M10 3v9M11.800 4.500v6M13.500 6v3" stroke="#3b6ea9" strokeWidth="1.3" />
  </TrackIcon>
);
const AudioIcon = () => (
  <TrackIcon width="20" height="15" viewBox="0 0 20 15" aria-hidden="true">
    <rect width="20" height="15" rx="1" fill="#283643" />
    <path d="M2 7.500l2.500-.8L6 5l1.200 1 1.300-2 1 .8.8-2.300.8 2.300 1.100.2 1.300-1 1 2.200 1.500-.2 2 1.500-2 1.500-1.500-.2-1 2.200-1.300-1-1.100.2-.8 2.300-.8-2.300-1 .8-1.300-2-1.200 1-1.500-1.700z" fill="#4487bb" />
  </TrackIcon>
);

const TrackHeader = ({ t, n }: { t: Track; n: number }) => (
  <TrackRow $selected={t.selected}>
    <TrackNumber>{n}</TrackNumber>
    {n === 1 ? <BeatIcon /> : <AudioIcon />}
    <TrackMain>
      <TrackName>{t.name}</TrackName>
      <TrackControls>
        <KeyGroup>
          <TrackKey type="button">M</TrackKey>
          <TrackKey type="button">S</TrackKey>
        </KeyGroup>
        <KeyGroup>
          <TrackKey type="button" $armed={t.selected}>R</TrackKey>
          <TrackKey type="button">I</TrackKey>
        </KeyGroup>
        <Level label={`Track ${n} volume`} value={t.vol} levels={t.levels} hot={n === 1}
          bg={t.selected ? '#454545' : '#373737'} thumb={t.selected ? '#b4b4b4' : '#949494'} />
        <DialSlot><PanDial size={16} label={`Track ${n} pan`} face={t.selected ? '#aaa' : '#939393'} /></DialSlot>
      </TrackControls>
    </TrackMain>
  </TrackRow>
);

const AudioClip = ({ c }: { c: ClipData }) => {
  const left = barX(c.from);
  const width = barX(c.to) - left;
  const mid = c.red ? 21 : 27;
  return (
    <Clip $red={c.red} style={{ left, width }}>
      <svg width={width} height="42" aria-hidden="true">
        <g fill={c.red ? '#d98d94' : '#dcecfd'}>
          <rect x="0" y={mid - 0.5} width={width} height="1" opacity=".8" />
          {c.bursts.map((b, i) => <path key={i} d={burstPath(b, mid)} />)}
        </g>
      </svg>
      {c.title && <ClipTitle>{c.title}{c.loop && <MonoIcon />}</ClipTitle>}
    </Clip>
  );
};

const TimeRuler = ({ width }: { width: number }) => {
  const bars = visibleBars(width);
  return (
    <Ruler>
      <OuterRange style={{ left: barX(25.34) }} />
      <svg width={width} height="26" aria-hidden="true">
        <path d={`M0 13.500h${width}`} stroke="#262626" />
        {[1, ...bars].map(b => (
          <g key={b} stroke="#6c6c6c">
            <path d={`M${barX(b) + 0.5} ${b % 2 ? 2 : 14}v${b % 2 ? 24 : 12}`} />
            {[0.25, 0.5, 0.75].map(q => <path key={q} d={`M${barX(b + q) + 0.5} 20v5`} opacity=".8" />)}
          </g>
        ))}
      </svg>
      {bars.filter(b => b % 2).map(b => <RulerLabel key={b} style={{ left: barX(b) + 2 }}>{b}</RulerLabel>)}
      <PlayheadPin width="13" height="13" viewBox="0 0 13 13" style={{ left: barX(14.75) - 6 }} aria-hidden="true">
        <path d="M2.500.500h8q1.500 0 1.500 1.500v4.500L6.500 12.500 1 6.500V2Q1 .500 2.500.500z" fill="#e23a45" />
      </PlayheadPin>
    </Ruler>
  );
};

const ClipRows = styled.div`
  position: absolute;
  inset: 0;
`;

const ClipRow = styled.div`
  ${rowRhythm}
  position: relative;
`;

const ClipLayer = () => (
  <ClipRows>
    {TRACKS.map((_, i) => (
      <ClipRow key={i}>
        {CLIPS.filter(c => c.track === i).map(c => <AudioClip key={c.from} c={c} />)}
      </ClipRow>
    ))}
  </ClipRows>
);

const LaneArea = ({ width }: { width: number }) => (
  <Lanes>
    {TRACKS.map((t, i) => (
      <Lane key={i} $selected={t.selected}>
        {i === 0 && (
          <BeatClip>
            <svg width={width} height="38" aria-hidden="true">
              <g fill="#d3e7fd">
                <path d={introPath()} />
                <rect x="121" y="8" width="121" height="27" />
                <path d={breakPath()} />
                <rect x="266" y="8" width={Math.max(0, width - 266)} height="27" />
              </g>
              <path d="M150 8.500h3M168 8.500h2M196 8.500h3M216 8.500h6M168 34.500h3M214 34.500h3M222 34.500h4M855 8.500h3M877 8.500h4M898 8.500h8M855 34.500h3M878 34.500h3M898 34.500h7" stroke="#3b72ac" />
            </svg>
            <BeatTitle style={{ left: -3 }}>ε4αль χζ # [nextrik]<StereoIcon /></BeatTitle>
            <BeatTitle style={{ left: barX(19.85) }}>150 πε4αль χζ # [nextrik]<StereoIcon /></BeatTitle>
          </BeatClip>
        )}
      </Lane>
    ))}
    <GridLines width={width} height="601" aria-hidden="true">
      {visibleBars(width).map(b => <path key={b} d={`M${barX(b) + 0.5} 38v563`} stroke="#fff" opacity={b % 2 ? 0.09 : 0.06} />)}
    </GridLines>
    <ClipLayer />
    <Playhead style={{ left: barX(14.75) }} />
  </Lanes>
);

export default function App() {
  const width = useTimelineWidth();
  return (
    <Page>
      <GlobalStyle />
      <AppToolbar />
      <Body>
        <Inspector>
          <InspectorRow type="button"><ChevronRight /><RowKey>Region:</RowKey>Audio Defaults</InspectorRow>
          <InspectorRow type="button"><ChevronRight /><RowKey>Track:</RowKey>Yeat main 4 AI</InspectorRow>
          <Strips>
            {STRIPS.map(s => <ChannelStrip key={s.name} s={s} />)}
          </Strips>
        </Inspector>
        <Arrange>
          <TracksMenuBar />
          <TrackGrid>
            <HeaderTools>
              <Segment><SegButton type="button" aria-label="Add track" $w={20}><PlusIcon /></SegButton></Segment>
              <Segment><SegButton type="button" aria-label="Duplicate track" $w={22}><DuplicateIcon /></SegButton></Segment>
              <Stretch $grow={1} />
              <Segment><SegButton type="button" aria-label="Track header options" $w={21}><TrayIcon /></SegButton></Segment>
            </HeaderTools>
            <TimeRuler width={width} />
            <TrackList>
              {TRACKS.map((t, i) => <TrackHeader key={i} t={t} n={i + 1} />)}
            </TrackList>
            <LaneArea width={width} />
          </TrackGrid>
        </Arrange>
      </Body>
    </Page>
  );
}
